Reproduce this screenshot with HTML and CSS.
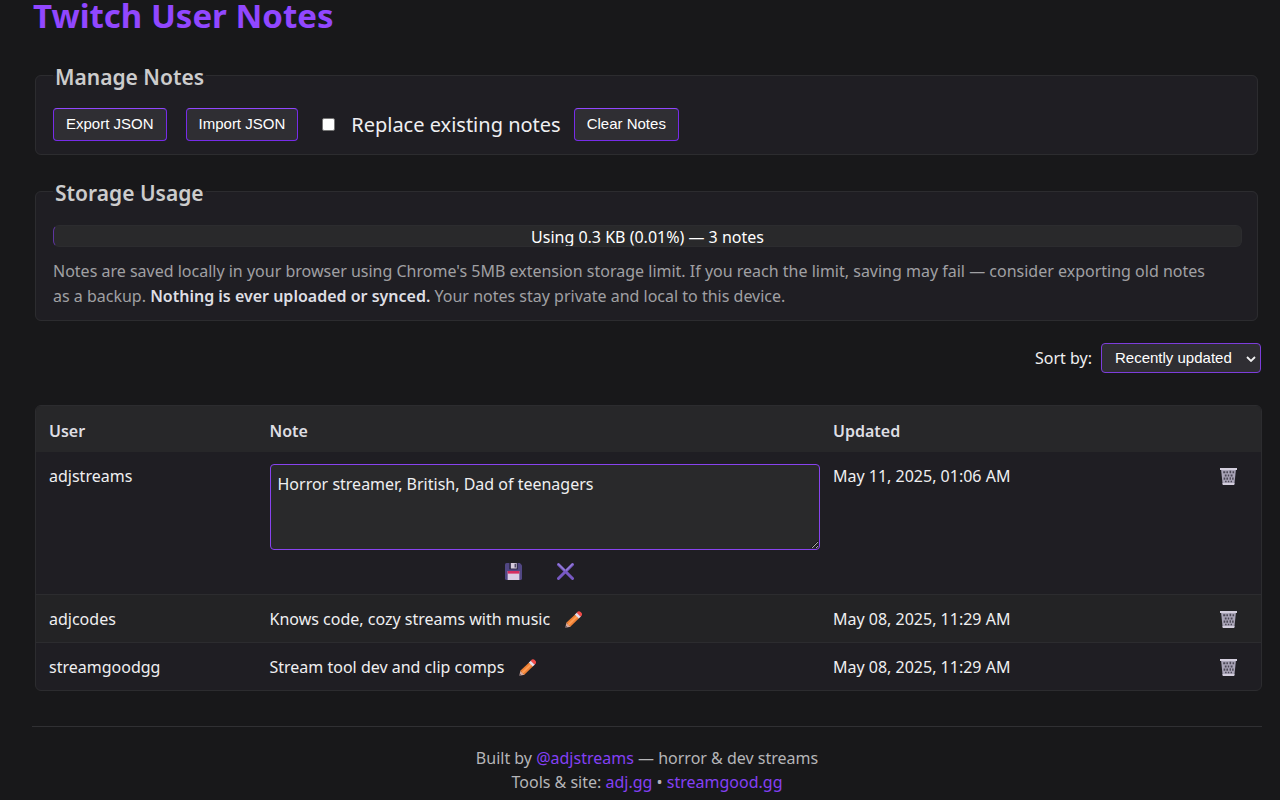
FILE: index.html
```html
<!DOCTYPE html>
<html lang="en">
<head>
<meta charset="utf-8">
<title>Twitch User Notes</title>
<link rel="stylesheet" href="styles.css">
</head>
<body>
<svg class="sprite" aria-hidden="true">
  <symbol id="trash" viewBox="0 0 16 16">
    <path d="M1 1.5h14L13.5 15.5h-11z" fill="#aaa5b8"/>
    <path d="M0 0h16v1.8H0zM2.3 14h11.4l-.4 2H2.7z" fill="#d3cedd"/>
    <path d="M3 3h2v2H3zM6 3h1.5v2H6zM9 2.5h1.5V5H9zM11.8 3h1.5v2h-1.5zM4.5 6h1.7v2H4.5zM7.3 6h1.4v2H7.3zM10 6h1.8v2H10zM3.4 9H5v2H3.4zM6 9h1.6v2H6zM9 8.6h1.3V11H9zM11.4 9h1.4v2h-1.4zM4.8 12h1.4v1.3H4.8zM7.4 12h1.3v1.3H7.4zM10 12h1.3v1.3H10z" fill="#4c4956"/>
  </symbol>
  <symbol id="pencil" viewBox="0 0 16 16">
    <path d="M.3 15.8l1-4.8 4 3.8z" fill="#d9a99b"/>
    <path d="M.3 15.8l.5-2 1.5 1.5z" fill="#514b5c"/>
    <path d="M1.2 11L9.5 3.2l3.7 3.7-8.2 8z" fill="#ef8136"/>
    <path d="M2.5 12.2l8.3-7.8 1.2 1.2-8.2 8z" fill="#ff9c52"/>
    <path d="M9.2 3.4l2.2-2 3.7 3.7-2.2 2z" fill="#e6dce9"/>
    <path d="M11 1.6Q13-.7 15 1.2t.3 3.6l-.5.5z" fill="#f04a48"/>
  </symbol>
  <symbol id="save" viewBox="0 0 16 16">
    <path d="M1.5 0H14l2 2v12.5q0 1.5-1.5 1.5h-13Q0 16 0 14.5v-13Q0 0 1.5 0z" fill="#514783"/>
    <path d="M4 0h8v6H4z" fill="#29243e"/>
    <path d="M5.5 0H11v5.2H5.5z" fill="#d5cbdc"/>
    <path d="M9 .8h1.3v3.4H9z" fill="#4a4260"/>
    <path d="M2.5 7.5h11V16h-11z" fill="#dacce4"/>
    <path d="M2.5 7.5h11V10h-11z" fill="#d62e61"/>
  </symbol>
  <symbol id="cancel" viewBox="0 0 16 16">
    <path d="M1.4 1.4l13.2 13.2M14.6 1.4L1.4 14.6" stroke="#7859c4" stroke-width="2.8" stroke-linecap="round"/>
    <path d="M1.4 1l5.8 5.7M14.4 1L8.8 6.7" stroke="#9784d8" stroke-width="1" stroke-linecap="round"/>
  </symbol>
</svg>
<main class="page">
  <h1 class="title">Twitch User Notes</h1>

  <fieldset class="panel">
    <legend class="panel-title">Manage Notes</legend>
    <div class="toolbar">
      <button class="btn" type="button">Export JSON</button>
      <button class="btn" type="button">Import JSON</button>
      <div class="replace">
        <label class="check"><input class="check-box" type="checkbox">Replace existing notes</label>
        <button class="btn" type="button">Clear Notes</button>
      </div>
    </div>
  </fieldset>

  <fieldset class="panel panel-usage">
    <legend class="panel-title">Storage Usage</legend>
    <div class="usage"><span class="usage-text">Using 0.3 KB (0.01%) — 3 notes</span></div>
    <p class="hint">Notes are saved locally in your browser using Chrome's 5MB extension storage limit. If you reach the limit, saving may fail — consider exporting old notes as a backup. <strong class="strong">Nothing is ever uploaded or synced.</strong> Your notes stay private and local to this device.</p>
  </fieldset>

  <div class="sort">
    <label for="sort">Sort by:</label>
    <span class="select-wrap">
      <select class="select" id="sort"><option>Recently updated</option></select>
      <svg class="chevron" viewBox="0 0 10 6" aria-hidden="true"><path d="M1 1l4 4 4-4" fill="none" stroke="#efeff1" stroke-width="1.8"/></svg>
    </span>
  </div>

  <table class="notes">
    <colgroup><col class="col-user"><col class="col-note"><col class="col-date"><col class="col-action"></colgroup>
    <thead>
      <tr><th>User</th><th>Note</th><th>Updated</th><th></th></tr>
    </thead>
    <tbody>
      <tr class="row">
        <td>adjstreams</td>
        <td>
          <textarea class="editor" aria-label="Note for adjstreams">Horror streamer, British, Dad of teenagers</textarea>
          <div class="editor-actions">
            <button class="icon-btn" type="button" aria-label="Save"><svg class="icon"><use href="#save"/></svg></button>
            <button class="icon-btn" type="button" aria-label="Cancel"><svg class="icon"><use href="#cancel"/></svg></button>
          </div>
        </td>
        <td>May 11, 2025, 01:06 AM</td>
        <td class="action"><button class="icon-btn" type="button" aria-label="Delete"><svg class="icon"><use href="#trash"/></svg></button></td>
      </tr>
      <tr class="row">
        <td>adjcodes</td>
        <td><div class="note">Knows code, cozy streams with music <button class="icon-btn" type="button" aria-label="Edit"><svg class="icon"><use href="#pencil"/></svg></button></div></td>
        <td>May 08, 2025, 11:29 AM</td>
        <td class="action"><button class="icon-btn" type="button" aria-label="Delete"><svg class="icon"><use href="#trash"/></svg></button></td>
      </tr>
      <tr class="row">
        <td>streamgoodgg</td>
        <td><div class="note">Stream tool dev and clip comps <button class="icon-btn" type="button" aria-label="Edit"><svg class="icon"><use href="#pencil"/></svg></button></div></td>
        <td>May 08, 2025, 11:29 AM</td>
        <td class="action"><button class="icon-btn" type="button" aria-label="Delete"><svg class="icon"><use href="#trash"/></svg></button></td>
      </tr>
    </tbody>
  </table>

  <footer class="footer">
    <div>Built by <a class="link" href="#">@adjstreams</a> — horror &amp; dev streams</div>
    <div>Tools &amp; site: <a class="link" href="#">adj.gg</a> • <a class="link" href="#">streamgood.gg</a></div>
  </footer>
</main>
</body>
</html>
```
FILE: styles.css
```css
* { box-sizing: border-box; }
body {
  margin: 0;
  background: #18181a;
  color: #efeff1;
  font: 16px/24px "Noto Sans", "Segoe UI", sans-serif;
}
.sprite { display: none; }
.page { padding: 0 18px 0 32px; }
.title {
  margin: 0 0 28px 1px;
  color: #9147ff;
  font-size: 33px;
  line-height: 32px;
  font-weight: 700;
}
.panel {
  min-width: 0;
  margin: 0 4px 21px 3px;
  padding: 18px 15px 13px 17px;
  border: 1px solid #2c2c2f;
  border-radius: 6px;
  background: #1f1e23;
}
.panel-usage { margin-bottom: 22px; padding-top: 19px; padding-bottom: 11px; }
.panel-title {
  padding: 4px 2px 0;
  color: #ccc;
  font-size: 21px;
  line-height: 26px;
  font-weight: 600;
}
.toolbar { display: flex; align-items: center; gap: 19px; }
.btn {
  height: 33px;
  padding: 0 12px 2px;
  border: 1px solid #772ce8;
  border-top-color: #9147ff;
  border-radius: 4px;
  background: #2f2e33;
  color: #fff;
  font: 15px "Liberation Sans", Arial, sans-serif;
}
.replace { display: flex; align-items: center; gap: 13px; margin-left: 5px; }
.check { display: flex; align-items: center; gap: 16px; font-size: 20px; }
.check-box {
  appearance: none;
  width: 13px;
  height: 13px;
  margin: 0;
  border: 1px solid #767676;
  border-radius: 2px;
  background: #fff;
}
.usage {
  height: 22px;
  overflow: hidden;
  border: 1px solid #2c2c2f;
  border-left-color: #5e35a0;
  border-radius: 6px;
  background: #29292b;
  color: #fff;
  line-height: 22px;
  text-align: center;
}
.hint { margin: 12px 0 0; padding-right: 32px; color: #a0a0a3; line-height: 25px; }
.strong { color: #dedee3; font-weight: 600; }
.sort {
  display: flex;
  align-items: center;
  justify-content: flex-end;
  gap: 9px;
  margin: 0 1px 32px 0;
}
.select-wrap { display: flex; position: relative; }
.select {
  appearance: none;
  height: 30px;
  padding: 0 28px 1px 13px;
  border: 1px solid #7c3ddb;
  border-radius: 4px;
  background: #2f2e33;
  color: #fff;
  font: 15px "Liberation Sans", Arial, sans-serif;
}
.chevron { position: absolute; right: 5px; top: 13px; width: 10px; height: 6px; }
.notes {
  width: calc(100% - 3px);
  margin-left: 3px;
  table-layout: fixed;
  border: 1px solid #2c2c2f;
  border-radius: 6px;
  border-spacing: 0;
  background: #1f1e23;
  overflow: hidden;
}
.col-user { width: 18%; }
.col-note { width: 46%; }
.col-date { width: 28%; }
.col-action { width: 8%; }
.notes th {
  height: 46px;
  padding: 3px 0 0 13px;
  background: #272729;
  color: #dedee3;
  font-weight: 600;
  text-align: left;
}
.notes td { padding: 12px 0 11px 13px; vertical-align: top; }
.row:nth-child(even) td { background: #232325; }
.row + .row td { border-top: 1px solid #2c2c2f; }
.editor {
  display: block;
  width: 100%;
  height: 86px;
  padding: 7px;
  border: 1px solid #8843ef;
  border-radius: 4px;
  background: #29292b;
  color: #efeff1;
  font: inherit;
  resize: vertical;
}
.editor-actions { display: flex; justify-content: center; gap: 35px; padding: 9px 10px 0 0; }
.icon-btn { display: flex; align-items: center; height: 24px; padding: 0; border: 0; background: none; }
.icon { width: 17px; height: 17px; }
.note { display: flex; gap: 15px; }
.notes .action .icon-btn { margin: 0 24px 0 auto; }
.footer {
  margin-top: 35px;
  padding: 19px 0 6px;
  border-top: 1px solid #303033;
  color: #b5b5b8;
  text-align: center;
}
.link { color: #8440f5; text-decoration: none; }
```
